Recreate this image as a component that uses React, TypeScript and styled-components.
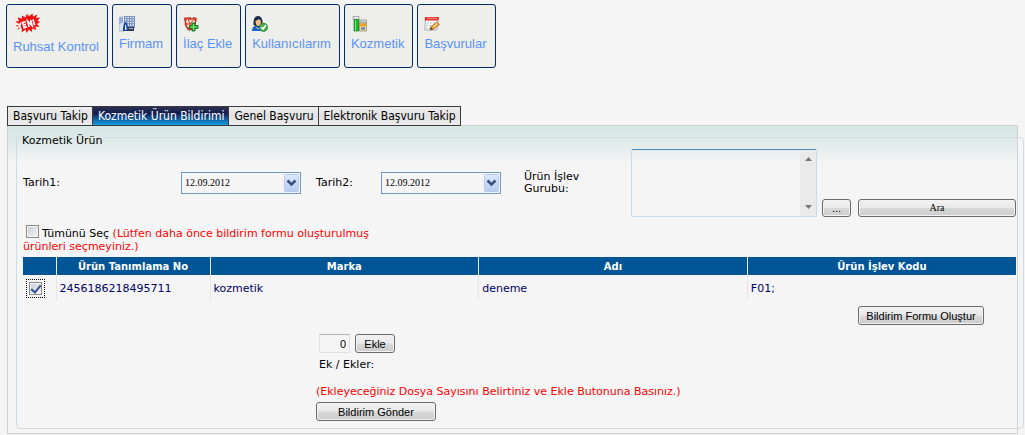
import React from 'react';
import styled, { createGlobalStyle, css } from 'styled-components';

const verdana = "Verdana, 'DejaVu Sans', sans-serif";
const arial = "'Liberation Sans', Arial, sans-serif";
const times = "'Liberation Serif', 'Times New Roman', serif";
const tahoma = "'DejaVu Sans Condensed', 'DejaVu Sans', sans-serif";

const GlobalStyle = createGlobalStyle`
  * { box-sizing: border-box; }
  body {
    margin: 0;
    background: #f5f5f5;
    color: #000;
    font: 11px/13px ${verdana};
  }
`;

const Page = styled.div`
  padding: 4px 7px 1px 6px;
`;

const Toolbar = styled.nav`
  display: flex;
  gap: 4px;
  margin-bottom: 38px;
`;

const ToolButton = styled.button`
  display: flex;
  flex-direction: column;
  align-items: flex-start;
  justify-content: center;
  gap: 3px;
  height: 64px;
  padding: 0 8px 3px 6px;
  border: 1px solid #002f6b;
  border-radius: 3px;
  background: #eeeeea;
  color: #5a93f7;
  font: 13px/18px ${arial};
  white-space: nowrap;
`;

const Tabs = styled.div`
  display: flex;
  position: relative;
  z-index: 1;
  margin: 0 0 -1px 1px;
`;

const Tab = styled.button<{ $active?: boolean }>`
  height: 20px;
  padding: 0 4px 0 5px;
  border: 1px solid #3a3a3a;
  background: linear-gradient(#ededed, #e2e2e2 50%, #ececec);
  color: #000;
  font: 12px/18px ${tahoma};
  white-space: nowrap;
  & + & { margin-left: -1px; }
  ${p => p.$active && css`
    background: linear-gradient(#2a3152, #131c50 35%, #1463a6 70%, #12a0e6);
    color: #fff;
  `}
`;

const Panel = styled.main`
  margin-left: 1px;
  padding: 1px 0 4px 8px;
  border: 1px solid #cfd2d2;
  background: linear-gradient(#d7e8e6, #dae8e6 10px, #f5f5f5 38px);
`;

const Group = styled.fieldset`
  min-width: 0;
  margin: 0 -7px 0 0;
  padding: 1px 7px 7px 6px;
  border: 1px solid #d0dce3;
  border-radius: 4px;
`;

const Legend = styled.legend`
  margin-left: -1px;
  padding: 7px 1px 0 0;
  line-height: 14px;
`;

const FormGrid = styled.div`
  display: grid;
  grid-template-columns: 158px 135px 65px 143px 107px 191px 36px 1fr;
  align-items: center;
`;

const Label = styled.label`
  line-height: 12px;
`;

const DateBox = styled.span`
  display: grid;
  width: 120px;
  height: 22px;
`;

const DateSelect = styled.select`
  grid-area: 1 / 1;
  width: 100%;
  padding: 0 20px 0 3px;
  border: 1px solid #7299c0;
  border-radius: 0;
  background: #f5f5f5;
  color: #000;
  font: 10px/18px ${times};
  appearance: none;
`;

const DateArrow = styled.svg`
  grid-area: 1 / 1;
  place-self: center end;
  margin-right: 2px;
  pointer-events: none;
`;

const ListFrame = styled.div`
  display: flex;
  width: 186px;
  height: 68px;
  border: 1px solid #c5dcec;
  border-top-color: #4a88b8;
  border-radius: 2px;
`;

const ListText = styled.textarea`
  flex: 1;
  min-width: 0;
  padding: 2px;
  border: 0;
  background: transparent;
  resize: none;
  overflow: hidden;
  font: 11px/13px ${verdana};
`;

const ScrollTrack = styled.div`
  display: flex;
  flex-direction: column;
  justify-content: space-between;
  align-items: center;
  width: 16px;
  padding: 7px 0;
  background: #eaeaea;
`;

const Button = styled.button<{ $width: string; $serif?: boolean; $bottom?: boolean }>`
  width: ${p => p.$width};
  height: ${p => (p.$bottom ? '18px' : '19px')};
  padding: 0;
  border: 1px solid #6a6a6a;
  border-radius: 3px;
  background: linear-gradient(#f2f2f2, #e9e9e9 48%, #d8d8d8 52%, #cdcdcd);
  box-shadow: inset 0 0 0 1px #f3f3f3;
  color: #000;
  font: 11px/16px ${arial};
  ${p => p.$serif && css`font: 10px/16px ${times};`}
  ${p => p.$bottom && css`align-self: end;`}
`;

const CheckBox = styled.input`
  appearance: none;
  display: inline-grid;
  place-items: center;
  width: 13px;
  height: 13px;
  margin: 0 3px;
  border: 1px solid #8a8a8a;
  background: linear-gradient(135deg, #c9ced6, #f4f4f4);
  box-shadow: inset 0 0 0 1px #f4f4f4;
  vertical-align: -1px;
  &:checked::before {
    content: '';
    width: 4px;
    height: 8px;
    margin-bottom: 2px;
    border: solid #37509c;
    border-width: 0 2px 2px 0;
    transform: rotate(40deg);
  }
`;

const RowCheckBox = styled(CheckBox)`
  display: grid;
  margin: 0 6px;
  outline: 1px dotted #000;
  outline-offset: 2px;
`;

const SelectAll = styled.div`
  grid-column: 1 / 4;
  padding: 8px 0 4px;
`;

const Warning = styled.span`
  color: #f00;
`;

const Table = styled.table`
  grid-column: 1 / -1;
  width: 100%;
  table-layout: fixed;
  border-collapse: collapse;
  color: #000066;
`;

const HeadCell = styled.th<{ $width?: string }>`
  width: ${p => p.$width ?? 'auto'};
  height: 18px;
  padding: 0;
  background: #005596;
  color: #fff;
  font-size: 10px;
  & + & { border-left: 1px solid #e8eef2; }
`;

const Cell = styled.td`
  height: 26px;
  padding: 0 3px;
  & + & { border-left: 1px solid #e6e6e6; }
`;

const CheckCell = styled(Cell)`
  padding: 0;
`;

const CreateSlot = styled.div`
  grid-column: 8;
  display: flex;
  padding: 5px 0 9px;
`;

const Upload = styled.section`
  grid-column: 3 / -1;
  display: flex;
  flex-direction: column;
  align-items: flex-start;
`;

const CountRow = styled.div`
  display: flex;
  gap: 5px;
  padding-left: 3px;
`;

const CountInput = styled.input`
  width: 31px;
  height: 19px;
  padding: 0 3px;
  border: 1px solid #e0e0e0;
  border-top-color: #b4b4b4;
  background: #f5f5f5;
  color: #000;
  font: 11px/16px ${arial};
  text-align: right;
`;

const FilesLabel = styled.label`
  padding: 5px 3px 14px;
`;

const Hint = styled.p`
  margin: 0 0 4px;
  color: #f00;
`;

const NewIcon = () => (
  <svg width="28" height="22" viewBox="-1 0 28 22" aria-hidden="true">
    <path d="M14 0l1.500 3 3-2.500.5 3 4.500-2-1.500 3.500 4.500-.5-3 3 2.500 1.500-3 2 2.500 3-4-.5.5 3.500-3.500-1.500-1 3.500-2.500-2.500-2.500 3.500-1-3.500-4 3 .5-4-4.500 1 2-3-4-.5 3-2-3-2.500 3.500-.5-1.500-3.500 4.500 1V2.500l3.500 2 1-3.500 2.500 2.500z" fill="#ee1414" />
    <g transform="rotate(-14 13 11)" stroke="#fff" strokeWidth="1.700" fill="none">
      <path d="M3.500 8l2 3 2-3M5.500 11v3.300M12.300 8.500H9.300v5.300h3M9.300 11.200h2.700M14.300 14.300V8.500l3.200 5.200V8M20 8v6" />
    </g>
  </svg>
);

const FirmIcon = () => (
  <svg width="16" height="16" viewBox="0 0 16 16" aria-hidden="true">
    <path d="M0 1l4-1v8H0z" fill="#a9bce0" />
    <path d="M5 0h11v12H5z" fill="#7089b8" />
    <path d="M6 1.500h9.500M6 4h9.500M6 6.500h9.500M6 9h9.500" stroke="#dce8fb" strokeWidth="1.300" strokeDasharray="1.500 1" />
    <path d="M1 2v12M3 2v6" stroke="#5b7bb5" strokeDasharray="1 1" />
    <path d="M0 15V8l3-2 2 1v8z" fill="#d7e4f7" stroke="#7692c2" strokeWidth=".6" />
    <path d="M4 15c0-5 1-8 2.500-9C8.500 7 9 11 9 15z" fill="#163f9c" />
    <path d="M6 14c0-3 0-5 .8-6 .6 2 .7 4 .7 6z" fill="#e5f1ff" />
    <path d="M9 11h6v4H9z" fill="#303a55" /><path d="M10 12.500h4" stroke="#a7b5d4" />
  </svg>
);

const DrugIcon = () => (
  <svg width="16" height="16" viewBox="0 0 16 16" aria-hidden="true">
    <path d="M2 3l3-1 3 1 3-1 2 1-1 6-3 4-3 1-3-4z" fill="#f7ddd6" stroke="#9b2c20" strokeWidth="1.300" />
    <path d="M5 3l2 5 4-5M3 8h9M7 8v5" stroke="#c8452f" fill="none" />
    <g fill="#d7422e"><circle cx="2.500" cy="3" r="1.800" /><circle cx="7" cy="2.500" r="1.500" /><circle cx="12" cy="3" r="1.800" /><circle cx="3" cy="8" r="1.500" /><circle cx="5.500" cy="12.500" r="1.600" /></g>
    <path d="M9 7h3v2.500h3v3h-3V15H9v-2.500H6.500v-3H9z" fill="#2fb13a" stroke="#0d6b1c" strokeWidth=".8" />
    <path d="M10.500 8v6M7.500 11H14" stroke="#8ee07c" />
  </svg>
);

const UserIcon = () => (
  <svg width="16" height="16" viewBox="0 0 16 16" aria-hidden="true">
    <path d="M0 15c0-4 2-5.500 6-5.500s6 1.500 6 5.500z" fill="#1d5fd0" />
    <path d="M1.500 9C1 3 3 0 6 0s5 3 4.500 8.500L6 11z" fill="#1f2b4a" />
    <path d="M3.500 5c1-.5 3-1.500 3.500-2 .5 1 2 1.500 2 2 0 3-1 5-2.700 5S3.500 8 3.500 5z" fill="#f3bd83" />
    <path d="M4 11l2.300 2L8.500 11" fill="none" stroke="#b6d5ff" />
    <circle cx="11.500" cy="11.300" r="4.200" fill="#48ad4a" stroke="#23782a" strokeWidth=".6" />
    <path d="M9.200 11.200l1.800 1.900 3-4" fill="none" stroke="#fff" strokeWidth="1.600" />
  </svg>
);

const CosmeticIcon = () => (
  <svg width="16" height="16" viewBox="-2 0 16 16" aria-hidden="true">
    <path d="M0 .5h6v3H0z" fill="#e4e7e8" stroke="#8c9694" strokeWidth=".7" />
    <path d="M1 3.500h5V15H1z" fill="#22b62e" stroke="#138020" strokeWidth=".7" />
    <path d="M2.500 4v10.500" stroke="#7ce67d" />
    <path d="M7 4h6.500v3H7z" fill="#d2d5d6" stroke="#8a8e90" strokeWidth=".7" />
    <path d="M6.500 7h7v8h-7z" fill="#e9d8a2" stroke="#8a8878" strokeWidth=".7" />
    <path d="M7 7.500h6v3H7z" fill="#efa421" /><path d="M8 12.500h4" stroke="#587cba" strokeWidth="2" />
  </svg>
);

const CalendarIcon = () => (
  <svg width="16" height="16" viewBox="0 0 16 16" aria-hidden="true">
    <path d="M1.500 1.500H14L13 14H.8z" fill="#fafafa" stroke="#8da0bc" strokeWidth=".8" />
    <path d="M1 1h14l-.5 3.500H.8z" fill="#df3325" /><path d="M3 2.300h10" stroke="#f59788" />
    <path d="M3 7h9M2.500 9.500h9M2 12h7" stroke="#9babc4" strokeDasharray="1.500 1.500" />
    <path d="M6 14l1-3.500L13 6l2.500 2.500L9 13.500z" fill="#f2a63b" stroke="#a85f17" strokeWidth=".7" />
    <path d="M6 14l1-3 2 2z" fill="#73411e" /><path d="M9 11l4.500-3.500" stroke="#ffe19a" />
  </svg>
);

const tools = [
  { text: 'Ruhsat Kontrol', Icon: NewIcon },
  { text: 'Firmam', Icon: FirmIcon },
  { text: 'İlaç Ekle', Icon: DrugIcon },
  { text: 'Kullanıcılarım', Icon: UserIcon },
  { text: 'Kozmetik', Icon: CosmeticIcon },
  { text: 'Başvurular', Icon: CalendarIcon },
];

const tabs = ['Başvuru Takip', 'Kozmetik Ürün Bildirimi', 'Genel Başvuru', 'Elektronik Başvuru Takip'];

const DateField = ({ id }: { id: string }) => (
  <DateBox>
    <DateSelect id={id} defaultValue="12.09.2012">
      <option>12.09.2012</option>
    </DateSelect>
    <DateArrow width="15" height="18" viewBox="0 0 15 18" aria-hidden="true">
      <defs>
        <linearGradient id={`${id}-fill`} x2="0" y2="1">
          <stop stopColor="#dbe6fb" /><stop offset="1" stopColor="#b7cdf3" />
        </linearGradient>
      </defs>
      <rect x=".5" y=".5" width="14" height="17" rx="1" fill={`url(#${id}-fill)`} stroke="#b9ccef" />
      <path d="M3.500 6.500l4 4 4-4" fill="none" stroke="#3b5280" strokeWidth="2.500" />
    </DateArrow>
  </DateBox>
);

export default function App() {
  return (
    <>
      <GlobalStyle />
      <Page>
        <Toolbar>
          {tools.map(({ text, Icon }) => (
            <ToolButton key={text} type="button"><Icon />{text}</ToolButton>
          ))}
        </Toolbar>
        <Tabs role="tablist">
          {tabs.map((text, i) => (
            <Tab key={text} type="button" role="tab" aria-selected={i === 1} $active={i === 1}>{text}</Tab>
          ))}
        </Tabs>
        <Panel>
          <Group>
            <Legend>Kozmetik Ürün</Legend>
            <FormGrid>
              <Label htmlFor="date1">Tarih1:</Label>
              <DateField id="date1" />
              <Label htmlFor="date2">Tarih2:</Label>
              <DateField id="date2" />
              <Label htmlFor="group">Ürün İşlev<br />Gurubu:</Label>
              <ListFrame>
                <ListText id="group" />
                <ScrollTrack>
                  <svg width="7" height="4" viewBox="0 0 7 4" aria-hidden="true"><path d="M0 4l3.500-4L7 4z" fill="#777" /></svg>
                  <svg width="7" height="4" viewBox="0 0 7 4" aria-hidden="true"><path d="M0 0l3.500 4L7 0z" fill="#777" /></svg>
                </ScrollTrack>
              </ListFrame>
              <Button type="button" $width="29px" $bottom>...</Button>
              <Button type="button" $width="100%" $serif $bottom>Ara</Button>

              <SelectAll>
                <CheckBox type="checkbox" id="all" /><label htmlFor="all">Tümünü Seç</label>{' '}
                <Warning>(Lütfen daha önce bildirim formu oluşturulmuş ürünleri seçmeyiniz.)</Warning>
              </SelectAll>

              <Table>
                <thead>
                  <tr>
                    <HeadCell $width="33px" />
                    <HeadCell $width="154px">Ürün Tanımlama No</HeadCell>
                    <HeadCell>Marka</HeadCell>
                    <HeadCell>Adı</HeadCell>
                    <HeadCell>Ürün İşlev Kodu</HeadCell>
                  </tr>
                </thead>
                <tbody>
                  <tr>
                    <CheckCell><RowCheckBox type="checkbox" defaultChecked aria-label="2456186218495711" /></CheckCell>
                    <Cell>2456186218495711</Cell>
                    <Cell>kozmetik</Cell>
                    <Cell>deneme</Cell>
                    <Cell>F01;</Cell>
                  </tr>
                </tbody>
              </Table>

              <CreateSlot>
                <Button type="button" $width="126px">Bildirim Formu Oluştur</Button>
              </CreateSlot>

              <Upload>
                <CountRow>
                  <CountInput id="count" type="text" defaultValue="0" />
                  <Button type="button" $width="40px">Ekle</Button>
                </CountRow>
                <FilesLabel htmlFor="count">Ek / Ekler:</FilesLabel>
                <Hint>(Ekleyeceğiniz Dosya Sayısını Belirtiniz ve Ekle Butonuna Basınız.)</Hint>
                <Button type="button" $width="120px">Bildirim Gönder</Button>
              </Upload>
            </FormGrid>
          </Group>
        </Panel>
      </Page>
    </>
  );
}
